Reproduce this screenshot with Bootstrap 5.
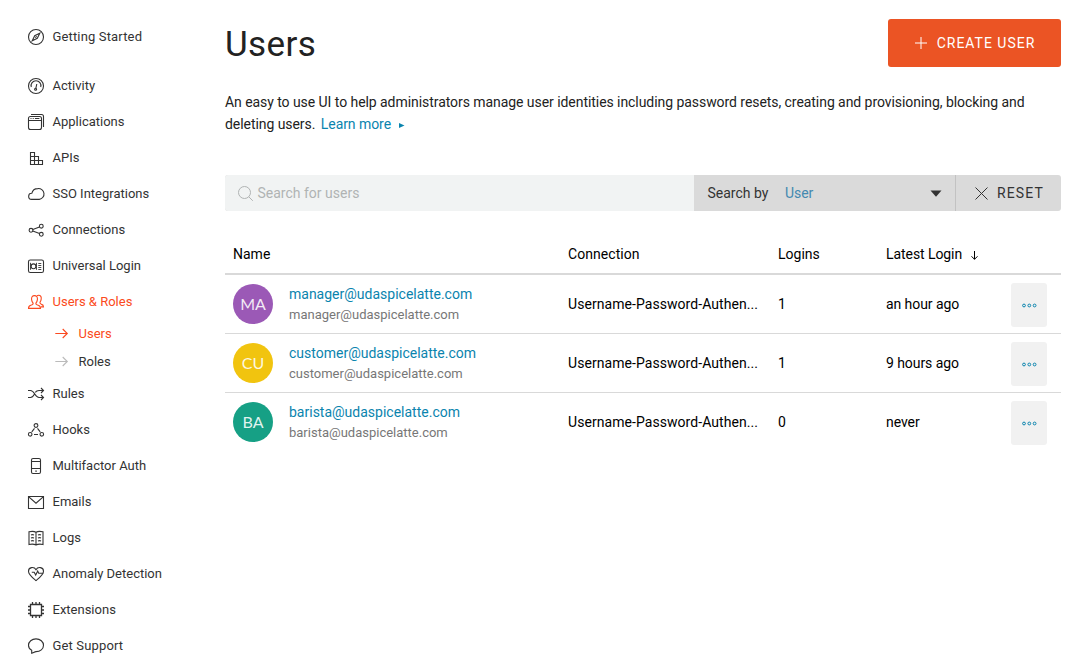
<!DOCTYPE html>
<html lang="en">
<head>
<meta charset="utf-8">
<meta name="viewport" content="width=device-width, initial-scale=1">
<title>Users</title>
<link rel="stylesheet" href="https://cdn.jsdelivr.net/npm/bootstrap@5.3.0/dist/css/bootstrap.min.css">
<style>
body{font-family:Roboto,"Liberation Sans",sans-serif;font-size:14px;line-height:22px;color:#000;background:#fff;overflow:hidden}
svg{fill:none;stroke:currentColor;flex:none;overflow:visible}
.side{width:225px;padding:19px 0 0 28px;font-size:13px}
.side .nav-link{height:36px;padding:0;gap:8.5px;color:#333}
.side .nav-link svg{width:16px;height:16px;stroke-width:1.1}
.side .intro-link{margin-bottom:13px}
.side .nav-link.sub{height:28px;padding-left:26.5px;gap:11px}
.side .nav-link.sub svg{width:13px;height:13px;margin-top:-1px}
.side .nav-link.hot{color:#fb4a20}
.side .pale{color:#bbb}
.spread{letter-spacing:.15px}
.page{width:836px;padding-top:19px}
h1{font-size:35px;line-height:52px;height:48px;font-weight:400;color:#222;letter-spacing:.4px}
.create{width:173px;height:48px;background:#eb5424;color:#fff;border-radius:3px;letter-spacing:1px;gap:10px;border:0;font-size:14px;padding:0 0 0 1px}
.about{margin:24px 0 0;color:#222;letter-spacing:-.058px}
.lnk{color:#0a84ae;text-decoration:none}
.learn{margin-left:2px}
.find{height:36px;margin-top:40px;border-radius:3px;overflow:hidden;background:#dadada;color:#333}
.query{width:469px;background:#f1f3f3;color:#b0b3b3;padding-left:12.5px;gap:5px}
.by{width:261px;padding:0 13px 0 13.5px;gap:16.5px}
.pick{color:#4489b0}
.reset{border-left:1px solid #c2c2c2;letter-spacing:1.1px;gap:9.5px;padding-left:18.5px}
.sheet{display:grid;grid-template-columns:335px 210px 108px 125px 36px;padding:0 8px;align-items:center}
.head{height:64px;align-items:start;padding-top:32px;border-bottom:2px solid #d9d9d9}
.line{height:59px;border-bottom:1px solid #d9d9d9}
.line:last-child{border-color:transparent}
.face{width:40px;height:40px;border-radius:50%;color:#ffffffe0;font-family:Lato,sans-serif;font-size:16px;padding-bottom:1px}
.purple{background:#9b59b6}.yellow{background:#f1c40f}.green{background:#16a085}
.mail{line-height:20px}
.mail .dim{font-size:13px;color:#777;padding-top:1px;margin-bottom:-1px}
.conn{letter-spacing:.06px}
.when{letter-spacing:-.07px}
.more{width:36px;height:44px;background:#f1f1f1;border-radius:3px;color:#0a84ae;border:0;padding:1px 0 0;margin-top:1px}
.more svg{display:block;margin:0 auto}
</style>
</head>
<body>
<div class="d-flex">
<nav class="side nav flex-column flex-nowrap">
<a class="nav-link d-flex align-items-center intro-link"><svg viewBox="0 0 16 16"><circle cx="8" cy="8" r="7.5"/><path d="M11.8 4.2 9.3 9.3 4.2 11.8 6.7 6.7ZM7.3 8.7l1.4-1.4"/></svg><span class="spread">Getting Started</span></a>
<a class="nav-link d-flex align-items-center"><svg viewBox="0 0 16 16"><circle cx="8" cy="8" r="7.5"/><path d="M3.3 9A4.9 4.9 0 1 1 12.700 9M8.800 6 7.900 10.200"/><circle cx="7.600" cy="11.300" r="1"/></svg><span>Activity</span></a>
<a class="nav-link d-flex align-items-center"><svg viewBox="0 0 16 16"><rect x=".5" y="2.500" width="13" height="13" rx="2"/><path d="M3 .5h10.500a2 2 0 0 1 2 2V13M.5 6.500h13M2.500 4.500h1M4.700 4.500h1M6.900 4.500h4.500"/></svg><span>Applications</span></a>
<a class="nav-link d-flex align-items-center"><svg viewBox="0 0 16 16"><path d="M2.500 2.500h4v12h-4zM6.500 6.500h4v8M10.500 10.500h4v4h-12M2.500 6.500h4M2.500 10.500h8"/></svg><span>APIs</span></a>
<a class="nav-link d-flex align-items-center"><svg viewBox="0 0 16 16"><path d="M3.600 13.400a3.050 3.050 0 0 1 .2-6.100C4.500 4.400 7 2.600 9.800 2.600a5.400 5.400 0 0 1 1.500 10.800z"/></svg><span>SSO Integrations</span></a>
<a class="nav-link d-flex align-items-center"><svg viewBox="0 0 16 16"><circle cx="3" cy="8.300" r="1.900"/><circle cx="13.300" cy="4.200" r="1.900"/><circle cx="13.300" cy="12.300" r="1.900"/><path d="m4.800 7.600 6.700-2.700M4.800 9l6.700 2.600"/></svg><span>Connections</span></a>
<a class="nav-link d-flex align-items-center"><svg viewBox="0 0 16 16"><rect x=".5" y="2" width="15" height="12.500" rx="1.800"/><circle cx="5.500" cy="8.300" r="2.400"/><path stroke-width=".9" d="M2.500 4.800v7M8.500 4.800v7M10.300 5.500h3M10.300 7.500h3M10.300 9.500h3M10.300 11.500h3"/></svg><span>Universal Login</span></a>
<a class="nav-link d-flex align-items-center hot"><svg viewBox="0 0 16 16"><path d="M6.500 1.600c-2.300 0-3.200 1.700-2.900 4 .2 1.700.7 2.700 1.500 3.500.2 1.400-.5 1.700-2.300 2.200C1 11.800.5 12.500.5 14.400h12c0-1.900-.5-2.600-2.300-3.100-1.800-.5-2.500-.8-2.300-2.200.8-.8 1.300-1.800 1.500-3.500.3-2.300-.6-4-2.900-4z"/><path d="M9 1.900c.5-.5 1-.6 1.600-.6 2.100 0 2.900 1.600 2.600 3.800-.2 1.500-.6 2.500-1.300 3.300-.1 1.200.3 1.500 1.700 2 1.400.4 1.900 1 1.900 2.500h-2.500"/></svg><span>Users &amp; Roles</span></a>
<a class="nav-link d-flex align-items-center sub hot"><svg viewBox="0 0 13 13"><path d="M.3 6.500h12M7.700 2l4.600 4.500L7.700 11"/></svg><span>Users</span></a>
<a class="nav-link d-flex align-items-center sub"><svg class="pale" viewBox="0 0 13 13"><path d="M.3 6.500h12M7.700 2l4.600 4.500L7.700 11"/></svg><span>Roles</span></a>
<a class="nav-link d-flex align-items-center"><svg viewBox="0 0 16 16"><path d="M0 4.500h2.500C6.500 4.500 7 11.500 11 11.500h4.500M0 11.500h2.500c2 0 3-1.700 3.900-3.300M7.300 6.400C8.200 5 9.200 4.500 11 4.500h4.500M13 2l2.500 2.500L13 7M13 9l2.500 2.500L13 14"/></svg><span>Rules</span></a>
<a class="nav-link d-flex align-items-center"><svg viewBox="0 0 16 16"><circle cx="8" cy="3.500" r="1.900"/><circle cx="2.200" cy="12.300" r="1.800"/><circle cx="13.800" cy="12.300" r="1.800"/><path d="M6.500 6.300 3.800 9.800M9.500 6.300l2.700 3.500M6 12.500h4"/></svg><span>Hooks</span></a>
<a class="nav-link d-flex align-items-center"><svg viewBox="0 0 16 16"><rect x="3.500" y=".5" width="9" height="15" rx="1.500"/><path d="M3.500 3.500h9M3.500 10.500h9M7.300 13.100h1.500"/></svg><span>Multifactor Auth</span></a>
<a class="nav-link d-flex align-items-center"><svg viewBox="0 0 16 16"><path d="M.5 2.500h15v12H.5zM.8 2.800 8 9.200l7.200-6.400"/></svg><span>Emails</span></a>
<a class="nav-link d-flex align-items-center"><svg viewBox="0 0 16 16"><path d="M8 2.300C6.500 1.300 3.500 1.200 1 1.800v12.700c2.500-.5 5.500-.3 7 .5 1.500-.8 4.500-1 7-.5V1.800c-2.500-.6-5.500-.5-7 .5zV15M3 5c1-.5 2-.4 3 .1M3 8c1-.5 2-.4 3 .1M3 11c1-.5 2-.4 3 .1M10 5.100c1-.5 2-.6 3-.1M10 8.100c1-.5 2-.6 3-.1M10 11.100c1-.5 2-.6 3-.1"/></svg><span>Logs</span></a>
<a class="nav-link d-flex align-items-center"><svg viewBox="0 0 16 16"><path d="M8 14.600C4 11.300.5 8.700.5 5.200c0-4 5.500-5 7.500-1.500 2-3.500 7.500-2.500 7.500 1.500 0 3.500-3.500 6.100-7.500 9.400z"/><path d="M3.800 6.300h2.400l1.500 2.700 2-4 1 2.200h4.500"/></svg><span>Anomaly Detection</span></a>
<a class="nav-link d-flex align-items-center"><svg viewBox="0 0 16 16"><path stroke-width="1.300" d="M2.500 2.500h11v11h-11zM4.500 0v2.500M8 0v2.500M11.500 0v2.500M4.500 13.500V16M8 13.500V16M11.500 13.500V16M0 4.500h2.500M0 8h2.500M0 11.500h2.500M13.500 4.500H16M13.500 8H16M13.500 11.500H16"/></svg><span>Extensions</span></a>
<a class="nav-link d-flex align-items-center"><svg viewBox="0 0 16 16"><path d="M3.700 15.300v-3C1.700 11.200.5 9.500.5 7.300c0-3.700 3.300-6.400 7.500-6.400s7.500 2.700 7.500 6.400-3.300 6.300-7.500 6.300c-1 0-2.800 1.200-4.300 1.700z"/></svg><span class="spread">Get Support</span></a>
</nav>
<main class="page">
<header class="d-flex justify-content-between">
<h1 class="mb-0">Users</h1>
<button class="create d-flex align-items-center justify-content-center"><svg width="12" height="12" viewBox="0 0 12 12"><path d="M6 0v12M0 6h12"/></svg><span>CREATE USER</span></button>
</header>
<p class="about">An easy to use UI to help administrators manage user identities including password resets, creating and provisioning, blocking and deleting users. <a class="lnk learn">Learn more<svg class="ms-2" width="6" height="5" viewBox="0 0 6 5"><path fill="currentColor" stroke="none" d="M0 0l5.500 2.500L0 5z"/></svg></a></p>
<div class="find d-flex">
<div class="query d-flex align-items-center"><svg width="15" height="15" viewBox="0 0 15 15"><circle cx="6.500" cy="6.500" r="6"/><path d="m10.800 10.800 4 4"/></svg><span>Search for users</span></div>
<div class="by d-flex align-items-center"><span>Search by</span><span class="pick">User</span><svg class="ms-auto" width="12" height="7" viewBox="0 0 12 7"><path fill="currentColor" stroke="none" d="M.5.500h11L6 6.700z"/></svg></div>
<div class="reset d-flex align-items-center flex-fill"><svg width="13" height="13" viewBox="0 0 13 13"><path d="m.5.500 12 12m0-12-12 12"/></svg><span>RESET</span></div>
</div>
<section>
<div class="sheet head"><span>Name</span><span class="conn">Connection</span><span>Logins</span><span class="when text-nowrap">Latest Login<svg class="ms-2" width="8" height="9" viewBox="0 0 8 9"><path d="M4.500 0v8.300M1.500 5.300l3 3 3-3"/></svg></span></div>
<div class="sheet line"><div class="d-flex align-items-center gap-3"><span class="face purple d-flex align-items-center justify-content-center">MA</span><div class="mail"><a class="lnk d-block">manager@udaspicelatte.com</a><span class="dim d-block">manager@udaspicelatte.com</span></div></div><span class="conn">Username-Password-Authen...</span><span>1</span><span class="when">an hour ago</span><button class="more"><svg width="15" height="5" viewBox="0 0 15 5"><circle cx="2" cy="2.500" r="1.400"/><circle cx="7.300" cy="2.500" r="1.400"/><circle cx="12.600" cy="2.500" r="1.400"/></svg></button></div>
<div class="sheet line"><div class="d-flex align-items-center gap-3"><span class="face yellow d-flex align-items-center justify-content-center">CU</span><div class="mail"><a class="lnk d-block">customer@udaspicelatte.com</a><span class="dim d-block">customer@udaspicelatte.com</span></div></div><span class="conn">Username-Password-Authen...</span><span>1</span><span class="when">9 hours ago</span><button class="more"><svg width="15" height="5" viewBox="0 0 15 5"><circle cx="2" cy="2.500" r="1.400"/><circle cx="7.300" cy="2.500" r="1.400"/><circle cx="12.600" cy="2.500" r="1.400"/></svg></button></div>
<div class="sheet line"><div class="d-flex align-items-center gap-3"><span class="face green d-flex align-items-center justify-content-center">BA</span><div class="mail"><a class="lnk d-block">barista@udaspicelatte.com</a><span class="dim d-block">barista@udaspicelatte.com</span></div></div><span class="conn">Username-Password-Authen...</span><span>0</span><span class="when">never</span><button class="more"><svg width="15" height="5" viewBox="0 0 15 5"><circle cx="2" cy="2.500" r="1.400"/><circle cx="7.300" cy="2.500" r="1.400"/><circle cx="12.600" cy="2.500" r="1.400"/></svg></button></div>
</section>
</main>
</div>
<script src="https://cdn.jsdelivr.net/npm/bootstrap@5.3.0/dist/js/bootstrap.bundle.min.js"></script>
</body>
</html>
